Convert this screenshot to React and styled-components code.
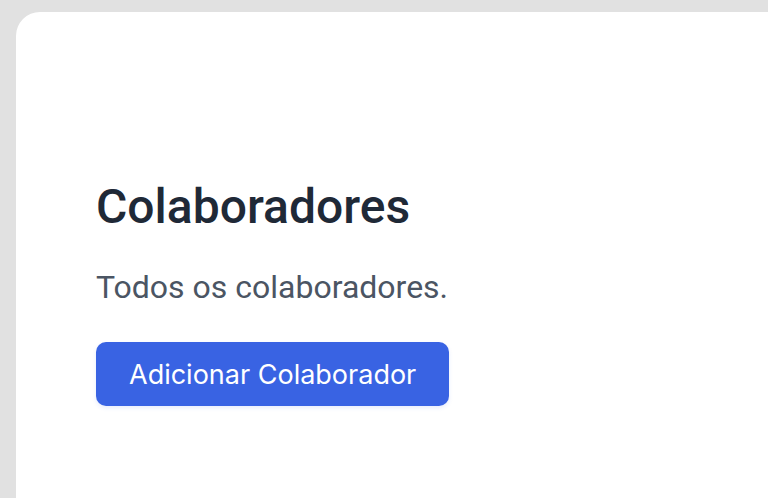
import React from 'react';
import styled, { createGlobalStyle } from 'styled-components';

const GlobalStyle = createGlobalStyle`
  html, body {
    margin: 0;
    padding: 0;
    height: 100%;
    background: #e1e1e1;
    overflow: hidden;
  }
  #root {
    height: 100%;
  }
`;

const Page = styled.div`
  height: 100%;
  padding: 12px 0 0 16px;
  box-sizing: border-box;
  display: flex;
`;

const Card = styled.main`
  flex: 1;
  background: #fff;
  border-top-left-radius: 24px;
  padding: 167px 80px 0;
`;

const Title = styled.h1`
  margin: 0;
  font-family: Roboto, "Liberation Sans", sans-serif;
  font-weight: 500;
  font-size: 48px;
  line-height: 56px;
  color: #1f2937;
`;

const Subtitle = styled.p`
  margin: 32px 0 0;
  font-family: Roboto, "Liberation Sans", sans-serif;
  font-weight: 400;
  font-size: 32px;
  line-height: 40px;
  color: #4b5563;
`;

const Button = styled.button`
  margin-top: 35px;
  height: 64px;
  padding: 0 33px;
  border: none;
  border-radius: 10px;
  background: #3963e3;
  color: #fff;
  font-family: Inter, "Liberation Sans", sans-serif;
  font-size: 27px;
  font-weight: 400;
  box-shadow: 0 2px 4px rgba(59, 99, 227, 0.12);
  cursor: pointer;
`;

export default function App() {
  return (
    <>
      <GlobalStyle />
      <Page>
        <Card>
          <Title>Colaboradores</Title>
          <Subtitle>Todos os colaboradores.</Subtitle>
          <Button>Adicionar Colaborador</Button>
        </Card>
      </Page>
    </>
  );
}
